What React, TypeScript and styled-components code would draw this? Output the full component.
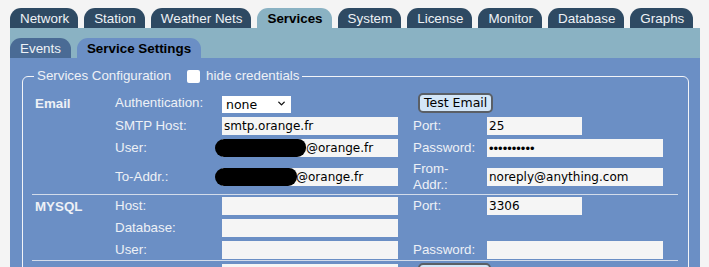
import React from "react";
import styled, { createGlobalStyle } from "styled-components";
import { ChevronDown } from "lucide-react";

const GlobalStyle = createGlobalStyle`
  body {
    margin: 0;
    background: #f4f4f4;
    font-family: "Liberation Sans", Arial, sans-serif;
  }
`;

const mainTabs = [
  "Network",
  "Station",
  "Weather Nets",
  "Services",
  "System",
  "License",
  "Monitor",
  "Database",
  "Graphs",
];

const App = () => {
  return (
    <Page>
      <GlobalStyle />
      <TabBar>
        {mainTabs.map((t) => (
          <Tab key={t} $active={t === "Services"}>
            {t}
          </Tab>
        ))}
      </TabBar>
      <SubPanel>
        <SubTabBar>
          <SubTab>Events</SubTab>
          <SubTab $active>Service Settings</SubTab>
        </SubTabBar>
      </SubPanel>
      <Content>
        <Fieldset>
          <Legend>
            Services Configuration
            <Check type="checkbox" />
            hide credentials
          </Legend>

          <Section>
            <Row>
              <SectionName>Email</SectionName>
              <Label>Authentication:</Label>
              <Cell>
                <SelectBox>
                  <select defaultValue="none">
                    <option value="none">none</option>
                    <option value="plain">plain</option>
                    <option value="login">login</option>
                  </select>
                  <ChevronDown size={11} strokeWidth={3} />
                </SelectBox>
              </Cell>
              <Cell $span>
                <Button>Test Email</Button>
              </Cell>
            </Row>
            <Row>
              <span />
              <Label>SMTP Host:</Label>
              <Cell>
                <Field $w={176} defaultValue="smtp.orange.fr" />
              </Cell>
              <Label>Port:</Label>
              <Cell>
                <Field $w={95} defaultValue="25" />
              </Cell>
            </Row>
            <Row>
              <span />
              <Label>User:</Label>
              <Cell>
                <Field $w={176} $indent={82} defaultValue="@orange.fr" />
                <Redact $w={91} />
              </Cell>
              <Label>Password:</Label>
              <Cell>
                <Secret $w={176} type="password" defaultValue="secretpass" />
              </Cell>
            </Row>
            <Row>
              <span />
              <Label>To-Addr.:</Label>
              <Cell>
                <Field $w={176} $indent={72} defaultValue="@orange.fr" />
                <Redact $w={82} />
              </Cell>
              <Label>
                From-
                <br />
                Addr.:
              </Label>
              <Cell>
                <Field $w={176} defaultValue="noreply@anything.com" />
              </Cell>
            </Row>
          </Section>

          <Section>
            <Row>
              <SectionName>MYSQL</SectionName>
              <Label>Host:</Label>
              <Cell>
                <Field $w={176} defaultValue="" />
              </Cell>
              <Label>Port:</Label>
              <Cell>
                <Field $w={95} defaultValue="3306" />
              </Cell>
            </Row>
            <Row>
              <span />
              <Label>Database:</Label>
              <Cell>
                <Field $w={176} defaultValue="" />
              </Cell>
            </Row>
            <Row>
              <span />
              <Label>User:</Label>
              <Cell>
                <Field $w={176} defaultValue="" />
              </Cell>
              <Label>Password:</Label>
              <Cell>
                <Field $w={176} defaultValue="" />
              </Cell>
            </Row>
          </Section>

          <Section $last>
            <Row>
              <span />
              <span />
              <Cell>
                <Field $w={176} defaultValue="" />
              </Cell>
              <Cell $span>
                <Button aria-label="Test" />
              </Cell>
            </Row>
          </Section>
        </Fieldset>
      </Content>
    </Page>
  );
};

export default App;

const Page = styled.div`
  padding: 8px 9px 0 10px;
  width: 690px;
`;

const TabBar = styled.div`
  display: flex;
  gap: 6px;
  height: 20px;
`;

const Tab = styled.div<{ $active?: boolean }>`
  height: 20px;
  line-height: 21px;
  padding: 0 9px 0 10px;
  border-radius: 11px 11px 0 0;
  font-size: 13.4px;
  background: ${(p) => (p.$active ? "#8ab2c3" : "#2e4a63")};
  color: ${(p) => (p.$active ? "#000" : "#eef2f6")};
  font-weight: ${(p) => (p.$active ? "bold" : "normal")};
  white-space: nowrap;
`;

const SubPanel = styled.div`
  background: #8ab2c3;
  padding-top: 10px;
`;

const SubTabBar = styled.div`
  display: flex;
  gap: 6px;
  height: 20px;
`;

const SubTab = styled.div<{ $active?: boolean }>`
  height: 20px;
  line-height: 21px;
  padding: 0 10px;
  border-radius: 11px 11px 0 0;
  font-size: 13.4px;
  background: ${(p) => (p.$active ? "#6b8fc5" : "#4a6b95")};
  color: ${(p) => (p.$active ? "#000" : "#eef2f6")};
  font-weight: ${(p) => (p.$active ? "bold" : "normal")};
`;

const Content = styled.div`
  background: #6b8fc5;
  padding: 10px 11px 20px 12px;
`;

const Fieldset = styled.fieldset`
  margin: 0;
  border: 1px solid #f2f4f8;
  border-radius: 6px;
  padding: 7px 10px 0 9px;
  min-width: 0;
`;

const Legend = styled.legend`
  display: flex;
  align-items: center;
  padding: 0 3px;
  margin-left: 2px;
  font-size: 13.33px;
  color: #eef1f6;
  line-height: 16px;
`;

const Check = styled.input`
  appearance: none;
  width: 13px;
  height: 13px;
  margin: 0 6px 0 16px;
  background: #fff;
  border-radius: 2px;
`;

const Section = styled.div<{ $last?: boolean }>`
  display: flex;
  flex-direction: column;
  gap: 4px;
  padding: 2px 0 1px;
  border-bottom: ${(p) => (p.$last ? "none" : "1px solid #d3dcea")};
`;

const Row = styled.div`
  display: grid;
  grid-template-columns: 80px 110px 188px 77px 1fr;
  align-items: center;
  min-height: 18px;
`;

const SectionName = styled.span`
  padding-left: 3px;
  font-size: 13.33px;
  font-weight: bold;
  color: #eef1f6;
`;

const Label = styled.span`
  padding-left: 3px;
  font-size: 13.33px;
  line-height: 16px;
  color: #eef1f6;
`;

const Cell = styled.div<{ $span?: boolean }>`
  position: relative;
  display: flex;
  align-items: center;
  grid-column: ${(p) => (p.$span ? "span 2" : "auto")};
  padding-left: ${(p) => (p.$span ? "8px" : "0")};
`;

const Field = styled.input<{ $w: number; $indent?: number }>`
  box-sizing: border-box;
  width: ${(p) => p.$w}px;
  height: 18px;
  border: none;
  outline: none;
  padding: 0 2px;
  text-indent: ${(p) => p.$indent ?? 0}px;
  background: #f5f5f5;
  font-family: "DejaVu Sans", sans-serif;
  font-size: 12px;
  color: #000;
`;

const Secret = styled(Field)`
  font-family: "Liberation Sans", Arial, sans-serif;
  font-size: 13px;
`;

const Redact = styled.span<{ $w: number }>`
  position: absolute;
  left: -7px;
  top: 0;
  width: ${(p) => p.$w}px;
  height: 18px;
  background: #000;
  border-radius: 9px 8px 9px 9px;
`;

const SelectBox = styled.div`
  position: relative;
  width: 69px;
  height: 17px;
  select {
    appearance: none;
    box-sizing: border-box;
    width: 100%;
    height: 100%;
    border: none;
    border-radius: 0;
    padding: 0 0 0 4px;
    background: #fff;
    font-family: "DejaVu Sans", sans-serif;
    font-size: 12.5px;
    color: #000;
  }
  svg {
    position: absolute;
    right: 4px;
    top: 3px;
    pointer-events: none;
    color: #111;
  }
`;

const Button = styled.button`
  box-sizing: border-box;
  min-width: 73px;
  height: 20px;
  padding: 0 4px;
  border: 2px solid #5a5f66;
  border-radius: 5px;
  background: #d3e6f8;
  font-family: "DejaVu Sans", sans-serif;
  font-size: 12.5px;
  color: #000;
  line-height: 14px;
`;
